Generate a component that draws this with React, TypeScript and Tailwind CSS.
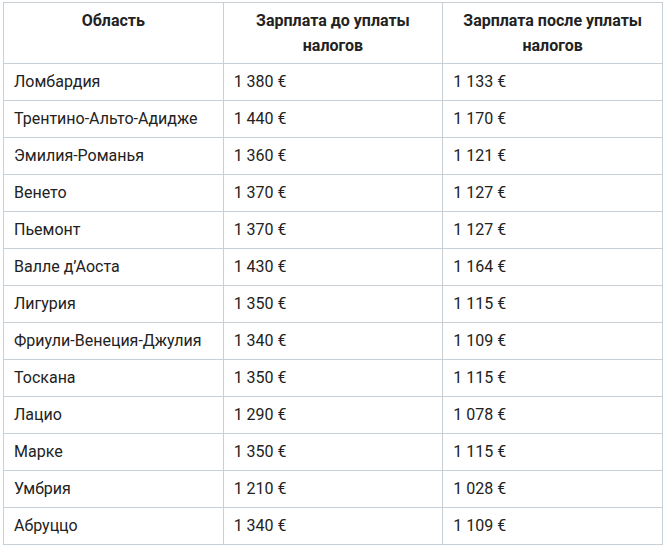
const rows: [string, string, string][] = [
  ["Ломбардия", "1 380 €", "1 133 €"],
  ["Трентино-Альто-Адидже", "1 440 €", "1 170 €"],
  ["Эмилия-Романья", "1 360 €", "1 121 €"],
  ["Венето", "1 370 €", "1 127 €"],
  ["Пьемонт", "1 370 €", "1 127 €"],
  ["Валле д’Аоста", "1 430 €", "1 164 €"],
  ["Лигурия", "1 350 €", "1 115 €"],
  ["Фриули-Венеция-Джулия", "1 340 €", "1 109 €"],
  ["Тоскана", "1 350 €", "1 115 €"],
  ["Лацио", "1 290 €", "1 078 €"],
  ["Марке", "1 350 €", "1 115 €"],
  ["Умбрия", "1 210 €", "1 028 €"],
  ["Абруццо", "1 340 €", "1 109 €"],
];

export default function App() {
  return (
    <div className="bg-white w-[665px] h-[545px] pt-[2px] pl-[3px] font-['Roboto',sans-serif] text-[16px] text-[#222]">
      <table className="border-collapse w-[660px] table-fixed">
        <thead>
          <tr className="h-[61px]">
            {["Область", "Зарплата до уплаты налогов", "Зарплата после уплаты налогов"].map((h) => (
              <th
                key={h}
                className="border border-[#c8d0d7] align-top px-[16px] pt-[5px] font-bold leading-[25px] text-center"
              >
                {h}
              </th>
            ))}
          </tr>
        </thead>
        <tbody>
          {rows.map((r) => (
            <tr key={r[0]} className="h-[37px]">
              {r.map((c, i) => (
                <td key={i} className="border border-[#c8d0d7] px-[10px] align-middle leading-[20px]">
                  {c}
                </td>
              ))}
            </tr>
          ))}
        </tbody>
      </table>
    </div>
  );
}
